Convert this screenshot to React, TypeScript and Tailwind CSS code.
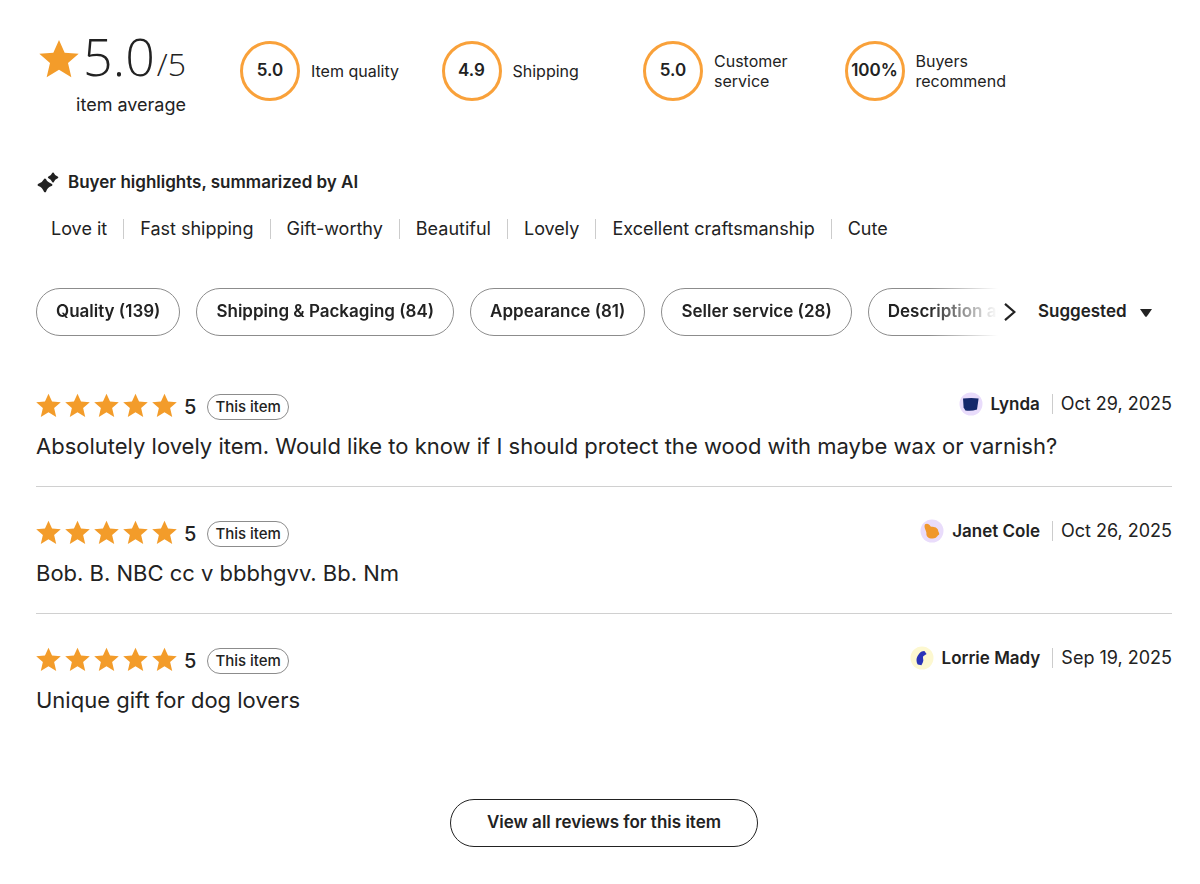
import React from "react";

const STAR = "M12 0.6l3.4 7.6 8.4.7-6.4 5.5 2 8.6-7.4-4.6-7.4 4.6 2-8.6L.2 8.9l8.4-.7z";

function Star({ className }: { className: string }) {
  return (
    <svg viewBox="0 0 24 24" className={className} fill="#f39c2a" aria-hidden="true">
      <path d={STAR} />
    </svg>
  );
}

const ratings = [
  { value: "5.0", label: "Item quality" },
  { value: "4.9", label: "Shipping" },
  { value: "5.0", label: "Customer service" },
  { value: "100%", label: "Buyers recommend" },
];

const highlights = ["Love it", "Fast shipping", "Gift-worthy", "Beautiful", "Lovely", "Excellent craftsmanship", "Cute"];

const filters = [
  "Quality (139)",
  "Shipping & Packaging (84)",
  "Appearance (81)",
  "Seller service (28)",
  "Description accuracy (19)",
];

const reviews = [
  {
    name: "Lynda",
    date: "Oct 29, 2025",
    text: "Absolutely lovely item. Would like to know if I should protect the wood with maybe wax or varnish?",
    bg: "#e9dcfb",
    fg: "#14286b",
    shape: "M4 6.6Q11 5.6 19.6 6.4L18 17.4Q12 19.6 6.4 18.4L4.6 15.4z",
  },
  {
    name: "Janet Cole",
    date: "Oct 26, 2025",
    text: "Bob. B. NBC cc v bbbhgvv. Bb. Nm",
    bg: "#e9dcfb",
    fg: "#f0982c",
    shape: "M5 5.2C7.2 4 9.2 4.8 10.6 7.4C13.4 7.8 16.8 7.8 18 10.8C17.8 12.6 19.8 14 19.2 15.6C17 16.6 17 19.4 12.8 19.6C8.4 19.8 6 17.4 6.4 14C6.4 11.4 3.4 8.6 5 5.2z",
  },
  {
    name: "Lorrie Mady",
    date: "Sep 19, 2025",
    text: "Unique gift for dog lovers",
    bg: "#fdf8d0",
    fg: "#2a34b8",
    shape: "M14.4 5L16.6 8L13.2 10.2C12.4 12.2 14.2 14.2 12.8 16.4L11.4 19.2L7.8 18.6C6 15.4 6 11.4 8.6 8.4C10 6 12 5.2 14.4 5z",
  },
];

function Summary() {
  return (
    <section className="flex items-start" aria-label="Rating summary">
      <div className="flex w-[150px] shrink-0 flex-col items-end">
        <div className="flex h-[60px] items-baseline font-['Open_Sans',sans-serif] font-light leading-none">
          <Star className="mr-1 size-10 self-center" />
          <span className="text-[52px] leading-[54px]">5.0</span>
          <span className="ml-0.5 text-[32px]">/5</span>
        </div>
        <p className="mt-1 text-lg leading-6">item average</p>
      </div>
      <ul className="ml-[54px] mt-3 grid max-w-[806px] flex-1 grid-cols-4">
        {ratings.map((r) => (
          <li key={r.label} className="flex items-center gap-[11px]">
            <span className="flex size-[60px] shrink-0 items-center justify-center rounded-full border-[3px] border-[#f9a13a] text-[17px] font-semibold">
              {r.value}
            </span>
            <span className="w-[100px] text-base leading-5">{r.label}</span>
          </li>
        ))}
      </ul>
    </section>
  );
}

function Highlights() {
  return (
    <section className="mt-[53px]">
      <h2 className="flex items-center gap-2 text-[17px] font-semibold leading-6">
        <svg viewBox="0 0 24 24" className="size-6" fill="currentColor" aria-hidden="true">
          <path d="M9 9.8Q10.4 13.4 15.2 14.8Q10.6 16.2 9 21Q7.2 16.4 2.8 14.8Q7.4 13.4 9 9.8z" stroke="currentColor" strokeWidth="2.4" strokeLinejoin="round" />
          <path d="M17 3.4Q18 6.4 21.4 7.4Q18 8.6 17 11.6Q15.8 8.6 12.8 7.4Q15.8 6.4 17 3.4z" stroke="currentColor" strokeWidth="1.8" strokeLinejoin="round" />
        </svg>
        Buyer highlights, summarized by AI
      </h2>
      <ul className="mt-[25px] flex flex-wrap">
        {highlights.map((h) => (
          <li key={h} className="border-l border-[#ccc] px-4 text-lg leading-5 first:border-l-0 first:pl-[15px]">
            {h}
          </li>
        ))}
      </ul>
    </section>
  );
}

function Filters() {
  return (
    <div className="mt-[49px] flex items-center">
      <div className="flex min-w-0 flex-1 gap-4 overflow-hidden [mask-image:linear-gradient(to_right,black_calc(100%-70px),transparent)]">
        {filters.map((f) => (
          <button
            key={f}
            type="button"
            className="h-12 shrink-0 whitespace-nowrap rounded-full border border-[#8c8c8c] px-[19px] text-[17px] font-semibold"
          >
            {f}
          </button>
        ))}
      </div>
      <button type="button" aria-label="More filters" className="flex h-12 w-6 shrink-0 items-center justify-center">
        <svg viewBox="0 0 12 20" className="h-5 w-3" fill="none" stroke="currentColor" strokeWidth="2.2" aria-hidden="true">
          <path d="M1 1.8L10.4 10L1 18.2" />
        </svg>
      </button>
      <div className="relative mb-0.5 ml-4 mr-5 w-[114px] shrink-0">
        <select aria-label="Sort reviews" className="block w-full appearance-none bg-transparent text-[17px] font-semibold leading-6">
          <option>Suggested</option>
          <option>Most recent</option>
        </select>
        <svg viewBox="0 0 12 8" className="pointer-events-none absolute right-0 top-2.5 h-2 w-3" fill="currentColor" aria-hidden="true">
          <path d="M0 0H12L6.8 7.4Q6 8 5.2 7.4z" />
        </svg>
      </div>
    </div>
  );
}

function Review({ review }: { review: (typeof reviews)[number] }) {
  return (
    <article className="border-b border-[#d0d0d0] pb-[26px] pt-[34px] last:border-b-0">
      <header className="flex h-[26px] items-center justify-between">
        <div className="flex items-center">
          <div className="mb-1 flex gap-1" role="img" aria-label="5 out of 5 stars">
            {[0, 1, 2, 3, 4].map((i) => (
              <Star key={i} className="size-[25px]" />
            ))}
          </div>
          <span className="ml-[7px] text-xl font-medium">5</span>
          <span className="ml-[11px] flex h-[26px] items-center rounded-full border border-[#8c8c8c] px-[7px] text-[15px] font-medium">
            This item
          </span>
        </div>
        <div className="-mt-1.5 flex items-center leading-5">
          <svg viewBox="0 0 24 24" className="mr-2 size-6" aria-hidden="true">
            <circle cx="12" cy="12" r="11.5" fill={review.bg} />
            <path d={review.shape} fill={review.fg} />
          </svg>
          <span className="text-[17px] font-semibold">{review.name}</span>
          <time className="ml-3 border-l border-[#ccc] pl-2 text-lg leading-5">{review.date}</time>
        </div>
      </header>
      <p className="mt-3 text-[22px] leading-7">{review.text}</p>
    </article>
  );
}

export default function App() {
  return (
    <main className="bg-white pb-9 pl-9 pr-7 pt-[29px] font-[Inter,sans-serif] text-[#222]">
      <Summary />
      <Highlights />
      <Filters />
      <div className="mt-6">
        {reviews.map((r) => (
          <Review key={r.name} review={r} />
        ))}
      </div>
      <div className="mt-[59px] flex justify-center">
        <button type="button" className="h-12 rounded-full border border-[#222] px-9 text-[17px] font-semibold">
          View all reviews for this item
        </button>
      </div>
    </main>
  );
}
